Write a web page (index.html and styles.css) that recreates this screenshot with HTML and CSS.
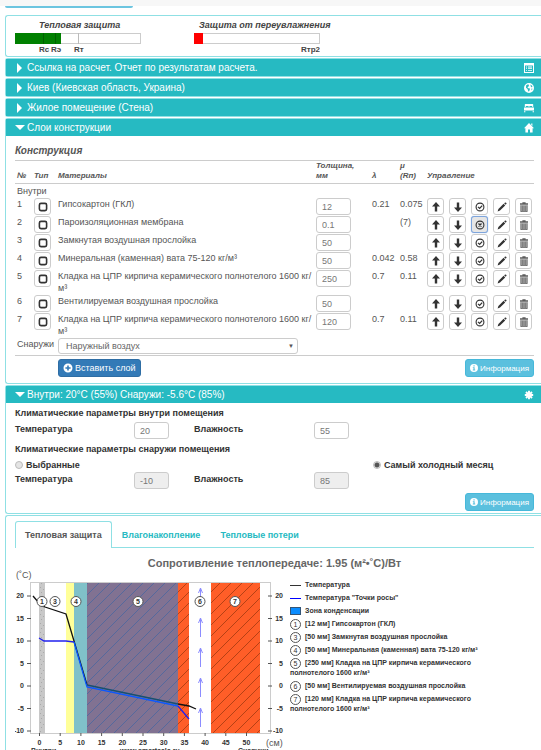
FILE: index.html
```
<!DOCTYPE html>
<html lang="ru">
<head>
    <meta charset="UTF-8">
    <meta name="viewport" content="width=device-width, initial-scale=1.0">
    <title>Теплотехнический расчет</title>
    <link rel="stylesheet" href="styles.css">
</head>
<body>
    <svg class="sprite" aria-hidden="true">
        <symbol id="i-up" viewBox="0 0 10 10"><path d="M5 0 9 4.6H6.2V9.6H3.8V4.6H1z"/></symbol>
        <symbol id="i-down" viewBox="0 0 10 10"><path d="M5 10 1 5.4H3.8V.4H6.2V5.4H9z"/></symbol>
        <symbol id="i-ok" viewBox="0 0 10 10"><circle cx="5" cy="5" r="3.9" fill="none" stroke="currentColor" stroke-width="1.1"/><path d="M3 4.9 4.6 6.4 7.2 3.6" fill="none" stroke="currentColor" stroke-width="1.3"/></symbol>
        <symbol id="i-off" viewBox="0 0 10 10"><circle cx="5" cy="5" r="3.9" fill="none" stroke="currentColor" stroke-width="1.1"/><path d="M3.5 3.5 6.5 6.5M6.5 3.5 3.5 6.5" stroke="currentColor" stroke-width="1.3"/></symbol>
        <symbol id="i-edit" viewBox="0 0 10 10"><path d="M.6 9.4 1.4 7 6.600 1.800 8.200 3.400 3 8.600zM7.200 1.400 8 .6Q8.500.2 9 .7L9.400 1.100Q9.800 1.600 9.300 2.100L8.600 2.800z"/></symbol>
        <symbol id="i-trash" viewBox="0 0 10 10"><path d="M3.4 1.2V.3H6.6V1.2H9V2.8H1V1.2z" opacity=".8"/><path d="M1.8 3.2H8.2V9.7H1.8z" opacity=".4"/><path d="M1.8 3.2V9.7H8.2V3.2M3.9 3.5V9M6.1 3.5V9" fill="none" stroke="currentColor" stroke-width=".6"/></symbol>
        <symbol id="i-box" viewBox="0 0 10 10"><rect x="1.4" y="1.4" width="7.2" height="7.2" rx="1.6" fill="none" stroke="currentColor" stroke-width="1.6"/></symbol>
        <symbol id="i-plus" viewBox="0 0 10 10"><path fill-rule="evenodd" d="M5 .5A4.5 4.5 0 1 0 5 9.5 4.5 4.5 0 1 0 5 .5M4.2 2.4H5.8V4.2H7.6V5.8H5.8V7.6H4.2V5.8H2.4V4.2H4.2z"/></symbol>
        <symbol id="i-info" viewBox="0 0 10 10"><path fill-rule="evenodd" d="M5 0A5 5 0 1 0 5 10 5 5 0 1 0 5 0M4.3 1.6H5.8V3H4.3zM3.5 4H5.8V7H6.5V8H3.5V7H4.3V5H3.5z"/></symbol>
        <symbol id="i-list" viewBox="0 0 10 10"><path fill-rule="evenodd" d="M0 0H10V10H0zM1 2.4V9H9V2.4z"/><path d="M2 3.6H3V4.4H2zM4 3.6H8V4.4H4zM2 5.3H3V6.1H2zM4 5.3H8V6.1H4zM2 7H3V7.8H2zM4 7H8V7.8H4z"/></symbol>
        <symbol id="i-globe" viewBox="0 0 10 10"><path fill-rule="evenodd" d="M5 0A5 5 0 1 0 5 10 5 5 0 1 0 5 0M2.2 2.2 4 1.3 5 2 4.6 3.4 3.4 4.2 4.4 5.2 6 5.6 5.6 7.2 4.8 8.8 4 7.4 3.6 6 2 4.8zM6.4 1.4 8.4 3 8 4.4 6.8 3.6zM7.4 5.6 8.6 5.8 7.6 7.6z"/></symbol>
        <symbol id="i-bed" viewBox="0 0 10 10"><path d="M1.4 1H8.6Q9.2 1 9.2 1.6V4H8.2V3H5.4V4H4.6V3H1.8V4H.8V1.6Q.8 1 1.4 1M0 4.6H10V7.6H0zM0 8.2H1.4V9.2H0zM8.6 8.2H10V9.2H8.6z"/></symbol>
        <symbol id="i-home" viewBox="0 0 10 10"><path d="M5 0 10 5.2H8.6V9.6H6V6.6H4V9.6H1.4V5.2H0L5 0M7.2.6H8.4V3L7.2 1.8z"/></symbol>
        <symbol id="i-frost" viewBox="0 0 10 10"><path d="M5 .8V9.200M.8 5H9.200M2 2 8 8M8 2 2 8" stroke="currentColor" stroke-width="1.9"/></symbol>
    </svg>

    <div class="topbar"><div class="topbar-line"></div></div>

    <section class="panel summary">
        <div class="gauge">
            <h3>Тепловая защита</h3>
            <svg viewBox="0 0 126 22" aria-hidden="true">
                <rect x=".5" y=".5" width="125" height="10" fill="#fff" stroke="#ccc"/>
                <rect width="46" height="11" fill="#008000"/>
                <path d="M28.5 0V11M40.5 0V11" stroke="#006000"/>
                <path d="M63.5 0V11" stroke="#bbb"/>
                <text x="24" y="19">Rc</text>
                <text x="36" y="19">Rэ</text>
                <text x="59" y="19">Rт</text>
            </svg>
        </div>
        <div class="gauge">
            <h3>Защита от переувлажнения</h3>
            <svg viewBox="0 0 126 22" aria-hidden="true">
                <rect x=".5" y=".5" width="125" height="10" fill="#fff" stroke="#ccc"/>
                <rect width="9" height="11" fill="#f00"/>
                <text x="126" y="19" text-anchor="end">Rтр2</text>
            </svg>
        </div>
    </section>

    <section class="panel">
        <h2><span class="arrow"></span>Ссылка на расчет. Отчет по результатам расчета.<svg class="icon"><use href="#i-list"/></svg></h2>
    </section>
    <section class="panel">
        <h2><span class="arrow"></span>Киев (Киевская область, Украина)<svg class="icon"><use href="#i-globe"/></svg></h2>
    </section>
    <section class="panel">
        <h2><span class="arrow"></span>Жилое помещение (Стена)<svg class="icon"><use href="#i-bed"/></svg></h2>
    </section>

    <section class="panel">
        <h2><span class="arrow open"></span>Слои конструкции<svg class="icon"><use href="#i-home"/></svg></h2>
        <div class="panel-body">
            <h3 class="caption">Конструкция</h3>
            <table class="layers">
                <colgroup>
                    <col class="c-num"><col class="c-type"><col><col class="c-thick"><col class="c-lambda"><col class="c-mu"><col class="c-ctrl">
                </colgroup>
                <thead>
                    <tr>
                        <th>№</th>
                        <th>Тип</th>
                        <th>Материалы</th>
                        <th>Толщина,<br>мм</th>
                        <th>λ</th>
                        <th>μ<br>(Rп)</th>
                        <th>Управление</th>
                    </tr>
                </thead>
                <tbody id="layers">
                    <tr class="side"><td colspan="7">Внутри</td></tr>
                </tbody>
            </table>
            <div class="outside">
                <label for="outside">Снаружи</label>
                <select id="outside">
                    <option>Наружный воздух</option>
                </select>
            </div>
            <div class="actions">
                <button type="button" class="btn btn-primary"><svg class="icon"><use href="#i-plus"/></svg>Вставить слой</button>
                <button type="button" class="btn btn-info"><svg class="icon"><use href="#i-info"/></svg>Информация</button>
            </div>
        </div>
    </section>

    <section class="panel climate">
        <h2><span class="arrow open"></span>Внутри: 20°C (55%) Снаружи: -5.6°C (85%)<svg class="icon"><use href="#i-frost"/></svg></h2>
        <div class="panel-body">
            <h4>Климатические параметры внутри помещения</h4>
            <div class="fields">
                <label for="t-in">Температура</label>
                <input type="text" id="t-in" value="20">
                <label for="h-in">Влажность</label>
                <input type="text" id="h-in" value="55">
            </div>
            <h4>Климатические параметры снаружи помещения</h4>
            <div class="modes">
                <label><input type="radio" name="mode">Выбранные</label>
                <label><input type="radio" name="mode" checked>Самый холодный месяц</label>
            </div>
            <div class="fields">
                <label for="t-out">Температура</label>
                <input type="text" id="t-out" value="-10" disabled>
                <label for="h-out">Влажность</label>
                <input type="text" id="h-out" value="85" disabled>
            </div>
            <div class="actions">
                <button type="button" class="btn btn-info"><svg class="icon"><use href="#i-info"/></svg>Информация</button>
            </div>
        </div>
    </section>

    <section class="panel result">
        <nav class="tabs">
            <a href="#heat" class="active">Тепловая защита</a>
            <a href="#moisture">Влагонакопление</a>
            <a href="#loss">Тепловые потери</a>
        </nav>
        <h3 class="chart-title">Сопротивление теплопередаче: 1.95 (м²•˚С)/Вт</h3>
        <div class="chart-row">
            <svg class="chart" viewBox="0 0 272 188" id="heat">
                <defs>
                    <pattern id="hatch" width="11" height="11" patternUnits="userSpaceOnUse">
                        <path d="M-1 12 12 -1M-1 1 1 -1M10 12 12 10" stroke="#a33a10" stroke-width=".8"/>
                    </pattern>
                    <pattern id="hatch-wet" width="11" height="11" patternUnits="userSpaceOnUse">
                        <path d="M-1 12 12 -1M-1 1 1 -1M10 12 12 10" stroke="#4a67a0" stroke-width=".8"/>
                    </pattern>
                    <pattern id="grit" width="6" height="9" patternUnits="userSpaceOnUse">
                        <path d="M1 1h1v1h-1zM4 3h1v1h-1zM2 6h1v1h-1z" fill="#aaa"/>
                    </pattern>
                </defs>
                <rect x="15.5" y="14.5" width="240" height="151" fill="#fff" stroke="#ccc"/>
                <rect x="24" y="15" width="6" height="150" fill="#c8c8c8"/>
                <rect x="24" y="15" width="6" height="150" fill="url(#grit)"/>
                <rect x="51" y="15" width="8" height="150" fill="#ffff99"/>
                <rect x="59" y="15" width="13" height="150" fill="#80c1c9"/>
                <rect x="72" y="15" width="91" height="150" fill="#817292"/>
                <rect x="72" y="15" width="91" height="150" fill="url(#hatch-wet)"/>
                <rect x="163" y="15" width="11" height="150" fill="#ff5e28"/>
                <rect x="163" y="15" width="11" height="150" fill="url(#hatch)"/>
                <rect x="196" y="15" width="49" height="150" fill="#ff5e28"/>
                <rect x="196" y="15" width="49" height="150" fill="url(#hatch)"/>
                <g id="arrows" fill="none" stroke="#8c8cff"></g>
                <path d="M18 28 24 35 30 39 51 46 59 73 72 117" fill="none" stroke="#111" stroke-width="1.3"/>
                <path d="M72 117 163 136" fill="none" stroke="#175070" stroke-width="1.3"/>
                <path d="M163 136 174 138 181 141" fill="none" stroke="#111" stroke-width="1.3"/>
                <path d="M24 70 29 73 51 73 59 74" fill="none" stroke="#2020ee" stroke-width="1.3"/>
                <path d="M59 74 72 119 163 138" fill="none" stroke="#0a58ff" stroke-width="1.3"/>
                <path d="M163 138 174 151" fill="none" stroke="#2020ee" stroke-width="1.3"/>
                <g id="marks"></g>
                <g id="axis-y"></g>
                <g id="axis-x"></g>
                <text class="unit" x="1" y="10">(˚C)</text>
                <text class="unit" x="251" y="178">(см)</text>
                <text x="16" y="185">Внутри</text>
                <text x="105" y="185">www.smartcalc.ru</text>
                <text x="223" y="185">Снаружи</text>
            </svg>
            <ul class="legend">
                <li><span class="line"></span>Температура</li>
                <li><span class="line dew"></span>Температура "Точки росы"</li>
                <li><span class="zone"></span>Зона конденсации</li>
                <li><span class="num">1</span>[12 мм] Гипсокартон (ГКЛ)</li>
                <li><span class="num">3</span>[50 мм] Замкнутая воздушная прослойка</li>
                <li><span class="num">4</span>[50 мм] Минеральная (каменная) вата 75-120 кг/м³</li>
                <li><span class="num">5</span>[250 мм] Кладка на ЦПР кирпича керамического полнотелого 1600 кг/м³</li>
                <li><span class="num">6</span>[50 мм] Вентилируемая воздушная прослойка</li>
                <li><span class="num">7</span>[120 мм] Кладка на ЦПР кирпича керамического полнотелого 1600 кг/м³</li>
            </ul>
        </div>
    </section>

    <script>
        const brick = 'Кладка на ЦПР кирпича керамического полнотелого 1600 кг/<wbr>м³';
        const layers = [
            { name: 'Гипсокартон (ГКЛ)', size: '12', lambda: '0.21', mu: '0.075' },
            { name: 'Пароизоляционная мембрана', size: '0.1', lambda: '', mu: '(7)', off: true },
            { name: 'Замкнутая воздушная прослойка', size: '50', lambda: '', mu: '' },
            { name: 'Минеральная (каменная) вата 75-120 кг/м³', size: '50', lambda: '0.042', mu: '0.58' },
            { name: brick, size: '250', lambda: '0.7', mu: '0.11' },
            { name: 'Вентилируемая воздушная прослойка', size: '50', lambda: '', mu: '' },
            { name: brick, size: '120', lambda: '0.7', mu: '0.11' }
        ];

        function iconButton(icon, label, extra) {
            return `<button type="button" class="btn-icon ${extra || ''}" aria-label="${label}"><svg class="icon"><use href="#i-${icon}"/></svg></button>`;
        }

        document.getElementById('layers').insertAdjacentHTML('beforeend', layers.map((l, i) => `
            <tr>
                <td>${i + 1}</td>
                <td>${iconButton('box', 'Тип слоя')}</td>
                <td>${l.name}</td>
                <td><input type="text" value="${l.size}" aria-label="Толщина"></td>
                <td>${l.lambda}</td>
                <td>${l.mu}</td>
                <td><div class="controls">
                    ${iconButton('up', 'Вверх')}
                    ${iconButton('down', 'Вниз')}
                    ${l.off ? iconButton('off', 'Включить', 'pressed') : iconButton('ok', 'Отключить')}
                    ${iconButton('edit', 'Изменить')}
                    ${iconButton('trash', 'Удалить')}
                </div></td>
            </tr>`).join(''));

        // temperature axis, both sides
        document.getElementById('axis-y').innerHTML = [20, 15, 10, 5, 0, -5, -10].map(t => {
            const y = 118 - t * 4.5;
            return `<path d="M12 ${y}H16M253 ${y}H257" stroke="#555"/>
                <text x="9" y="${y + 2}" text-anchor="end">${t}</text>
                <text x="268" y="${y + 2}" text-anchor="end">${t}</text>`;
        }).join('');

        // distance axis
        document.getElementById('axis-x').innerHTML = [0, 5, 10, 15, 20, 25, 30, 35, 40, 45, 50].map(d => {
            const x = 24.5 + d * 4.14;
            return `<path d="M${x} 165V168" stroke="#555"/><text x="${x}" y="177" text-anchor="middle">${d}</text>`;
        }).join('');

        // ventilated gap
        document.getElementById('arrows').innerHTML = [20, 50, 80, 110, 140].map(y =>
            `<path d="M185.5 ${y + 19}V${y}M183.5 ${y + 5}L185.5 ${y}L187.5 ${y + 5}"/>`).join('');

        document.getElementById('marks').innerHTML = [[1, 27], [3, 40], [4, 61], [5, 123], [6, 185], [7, 220]].map(m =>
            `<circle cx="${m[1]}" cy="33.5" r="5" fill="#fff" stroke="#555"/><text x="${m[1]}" y="36" text-anchor="middle">${m[0]}</text>`).join('');
    </script>
</body>
</html>
```
FILE: styles.css
```
* {
    box-sizing: border-box;
}
body {
    margin: 0;
    padding-left: 5px;
    overflow-x: hidden;
    font-family: "Liberation Sans", Arial, sans-serif;
    font-size: 9px;
    line-height: 12px;
    color: #555;
    background-color: #fff;
}
h2, h3, h4 {
    margin: 0;
}
.sprite {
    display: none;
}
.icon {
    width: 10px;
    height: 10px;
    fill: currentColor;
    flex: none;
}
.topbar {
    height: 15px;
    padding-top: 6px;
    margin-left: -5px;
    padding-left: 5px;
    background: linear-gradient(#f7f7f7 6px, #fff 6px);
}
.topbar-line {
    width: 128px;
    height: 2px;
    background-color: #6cc5e0;
    border-radius: 0 0 2px 2px;
}
.panel {
    border: 1px solid #8fe0e4;
    border-right: none;
    border-radius: 3px 0 0 3px;
    margin-bottom: 1px;
}
.panel h2 {
    display: flex;
    align-items: center;
    height: 17px;
    padding: 0 7px 0 9px;
    font-size: 10px;
    font-weight: normal;
    color: #fff;
    background-color: #26bac2;
}
.panel h2 .icon {
    margin-left: auto;
}
.arrow {
    width: 12px;
    flex: none;
}
.arrow::before {
    content: "";
    display: block;
    width: 0;
    margin-left: 2px;
    border: 5px solid transparent;
    border-left: 5px solid #fff;
    border-right: none;
}
.arrow.open::before {
    margin-left: 0;
    border: 5px solid transparent;
    border-top: 5px solid #fff;
    border-bottom: none;
}
.panel-body {
    padding: 0 7px 6px 9px;
}
.summary {
    display: flex;
    gap: 53px;
    height: 42px;
    padding: 3px 9px;
}
.gauge {
    width: 126px;
}
.gauge h3 {
    margin-left: 24px;
    font-size: 9px;
    font-style: italic;
    white-space: nowrap;
    color: #444;
}
.gauge + .gauge h3 {
    margin-left: 5px;
}
.gauge svg {
    display: block;
    width: 126px;
    height: 22px;
    margin-top: 2px;
    font-size: 8px;
    font-weight: bold;
    fill: #444;
}
.caption {
    padding: 9px 0 3px;
    font-size: 10px;
    font-style: italic;
    border-bottom: 1px solid #ccc;
}
.layers {
    width: 100%;
    table-layout: fixed;
    border-collapse: collapse;
}
.c-num { width: 19px; }
.c-type { width: 24px; }
.c-thick { width: 56px; }
.c-lambda { width: 28px; }
.c-mu { width: 27px; }
.c-ctrl { width: 107px; }
.layers th {
    padding: 0 0 2px;
    font-size: 8px;
    line-height: 10px;
    font-style: italic;
    text-align: left;
    vertical-align: bottom;
    border-bottom: 1px solid #ccc;
}
.layers th:first-child,
.layers td:first-child {
    padding-left: 2px;
}
.layers td {
    padding: 1px 0 0;
    vertical-align: top;
}
.layers input,
.fields input {
    display: block;
    width: 35px;
    height: 17px;
    padding: 0 5px;
    font: inherit;
    color: #777;
    background-color: #fff;
    border: 1px solid #ccc;
    border-radius: 3px;
}
.btn-icon {
    display: flex;
    align-items: center;
    justify-content: center;
    width: 17px;
    height: 17px;
    padding: 0;
    color: #333;
    background-color: #fff;
    border: 1px solid #ccc;
    border-radius: 3px;
}
.btn-icon.pressed {
    background-color: #e6e6e6;
    border-color: #7ea5dc;
    box-shadow: 0 0 1px #7ea5dc;
}
.controls {
    display: flex;
    gap: 5px;
}
.outside {
    display: flex;
    padding: 1px 2px;
    border-bottom: 1px solid #ccc;
}
.outside label {
    width: 41px;
}
.outside select {
    width: 240px;
    height: 16px;
    padding: 0 7px;
    font: inherit;
    color: #666;
    appearance: none;
    background-color: #fff;
    border: 1px solid #ccc;
    border-radius: 3px;
}
.outside::after {
    content: "▼";
    width: 0;
    margin-left: -10px;
    font-size: 6px;
    line-height: 16px;
    pointer-events: none;
}
.actions {
    display: flex;
    padding-top: 3px;
}
.btn {
    display: flex;
    align-items: center;
    gap: 2px;
    height: 18px;
    padding: 0 4px;
    font-family: inherit;
    color: #fff;
    border: 1px solid;
    border-radius: 3px;
    white-space: nowrap;
}
.btn-primary {
    margin-left: 43px;
    font-size: 9px;
    background-color: #337ab7;
    border-color: #2e6da4;
}
.btn-info {
    margin-left: auto;
    font-size: 8px;
    background-color: #5bc0de;
    border-color: #46b8da;
}
.btn-info .icon {
    width: 8px;
    height: 8px;
}
.climate {
    color: #333;
}
.climate .panel-body {
    padding-bottom: 2px;
}
.climate .actions {
    padding-top: 4px;
}
.climate h4 {
    padding: 4px 0 3px;
    font-size: 9px;
}
.fields {
    display: flex;
    font-weight: bold;
}
.fields label {
    width: 119px;
    padding-top: 1px;
}
.fields input {
    margin-right: 25px;
    font-weight: normal;
}
.fields label + input + label {
    width: 120px;
}
.fields input:disabled {
    background-color: #eee;
}
.modes {
    display: flex;
    padding: 1px 0;
    font-weight: bold;
}
.modes label {
    display: flex;
    align-items: center;
    gap: 3px;
    width: 358px;
}
.modes label + label {
    width: auto;
}
.modes input {
    width: 8px;
    height: 8px;
    margin: 0;
    appearance: none;
    background-color: #e4e4e4;
    border: 1px solid #bbb;
    border-radius: 50%;
}
.modes input:checked {
    background: radial-gradient(#555 2px, #e4e4e4 3px);
}
.result {
    padding: 5px 7px 0 9px;
    border-bottom: none;
}
.tabs {
    display: flex;
    border-bottom: 1px solid #8fe0e4;
}
.tabs a {
    padding: 7px 9px 6px;
    font-weight: bold;
    line-height: 12px;
    color: #26bac2;
    text-decoration: none;
    border: 1px solid transparent;
    border-bottom: none;
}
.tabs .active {
    margin-bottom: -1px;
    color: #555;
    background-color: #fff;
    border-color: #8fe0e4;
    border-radius: 3px 3px 0 0;
}
.chart-title {
    padding-top: 8px;
    font-size: 11px;
    line-height: 14px;
    text-align: center;
    color: #666;
}
.chart-row {
    display: flex;
    gap: 3px;
    margin-top: -2px;
}
.chart {
    flex: none;
    width: 272px;
    height: 188px;
    font-size: 7px;
    font-weight: bold;
    fill: #333;
}
.chart .unit {
    font-size: 9px;
    font-weight: normal;
    fill: #555;
}
.legend {
    flex: 1;
    margin: 0;
    padding: 12px 40px 0 0;
    list-style: none;
    font-size: 7px;
    font-weight: bold;
    line-height: 10px;
    color: #333;
}
.legend li {
    padding-bottom: 3px;
}
.legend span {
    display: inline-block;
    width: 11px;
    margin: -2px 4px -2px 0;
    vertical-align: middle;
}
.legend .line {
    height: 1px;
    margin: 0 4px 0 0;
    background-color: #333;
}
.legend .dew {
    background-color: #00f;
}
.legend .zone {
    height: 8px;
    background-color: #0a8cff;
    border: 1px solid #357;
}
.legend .num {
    height: 11px;
    line-height: 9px;
    font-weight: normal;
    text-align: center;
    border: 1px solid #555;
    border-radius: 50%;
}
```
